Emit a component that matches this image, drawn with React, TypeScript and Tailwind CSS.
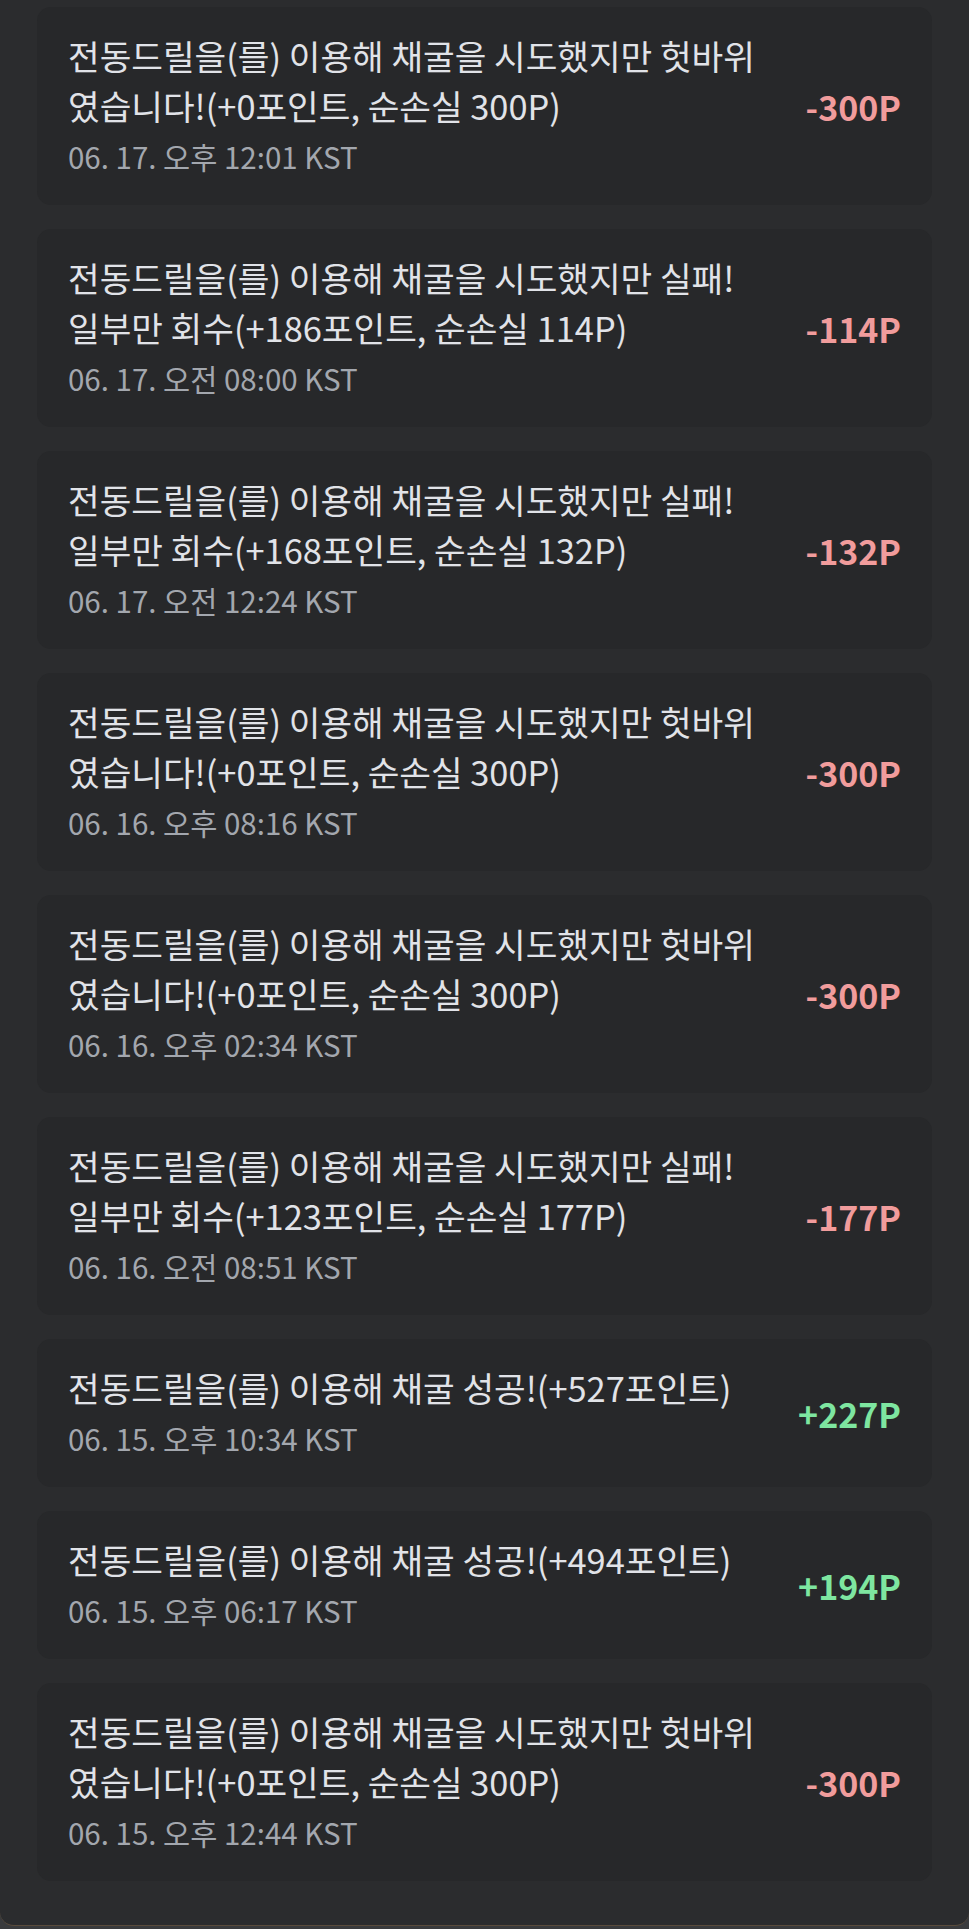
const ITEMS = [
  { text: "전동드릴을(를) 이용해 채굴을 시도했지만 헛바위였습니다!(+0포인트, 순손실 300P)", date: "06. 17. 오후 12:01 KST", amount: "-300P" },
  { text: "전동드릴을(를) 이용해 채굴을 시도했지만 실패! 일부만 회수(+186포인트, 순손실 114P)", date: "06. 17. 오전 08:00 KST", amount: "-114P" },
  { text: "전동드릴을(를) 이용해 채굴을 시도했지만 실패! 일부만 회수(+168포인트, 순손실 132P)", date: "06. 17. 오전 12:24 KST", amount: "-132P" },
  { text: "전동드릴을(를) 이용해 채굴을 시도했지만 헛바위였습니다!(+0포인트, 순손실 300P)", date: "06. 16. 오후 08:16 KST", amount: "-300P" },
  { text: "전동드릴을(를) 이용해 채굴을 시도했지만 헛바위였습니다!(+0포인트, 순손실 300P)", date: "06. 16. 오후 02:34 KST", amount: "-300P" },
  { text: "전동드릴을(를) 이용해 채굴을 시도했지만 실패! 일부만 회수(+123포인트, 순손실 177P)", date: "06. 16. 오전 08:51 KST", amount: "-177P" },
  { text: "전동드릴을(를) 이용해 채굴 성공!(+527포인트)", date: "06. 15. 오후 10:34 KST", amount: "+227P" },
  { text: "전동드릴을(를) 이용해 채굴 성공!(+494포인트)", date: "06. 15. 오후 06:17 KST", amount: "+194P" },
  { text: "전동드릴을(를) 이용해 채굴을 시도했지만 헛바위였습니다!(+0포인트, 순손실 300P)", date: "06. 15. 오후 12:44 KST", amount: "-300P" },
];

export default function App() {
  return (
    <div
      className="min-h-[1929px] bg-[#3a3b3d]"
      style={{ fontFamily: '"Noto Sans CJK KR", "Noto Sans", sans-serif' }}
    >
      <div className="flex flex-col gap-[24px] rounded-b-[14px] border-b border-[#5a4b3b] bg-[#2b2c2e] px-[37px] pb-[44px] pt-[7px]">
        {ITEMS.map((item, i) => (
          <div
            key={i}
            className="flex items-center justify-between rounded-[14px] bg-[#27282a] px-[31px] py-[23px]"
          >
            <div className="w-[705px]">
              <p className="text-[34.4px] leading-[50px] text-[#e1e3e8]">{item.text}</p>
              <p className="text-[29.5px] leading-[52px] text-[#a3a7ae]">{item.date}</p>
            </div>
            <span
              className={
                item.amount.startsWith("+")
                  ? "text-[34px] font-bold text-[#7ee6a0]"
                  : "text-[34px] font-bold text-[#f19c9c]"
              }
            >
              {item.amount}
            </span>
          </div>
        ))}
      </div>
    </div>
  );
}
